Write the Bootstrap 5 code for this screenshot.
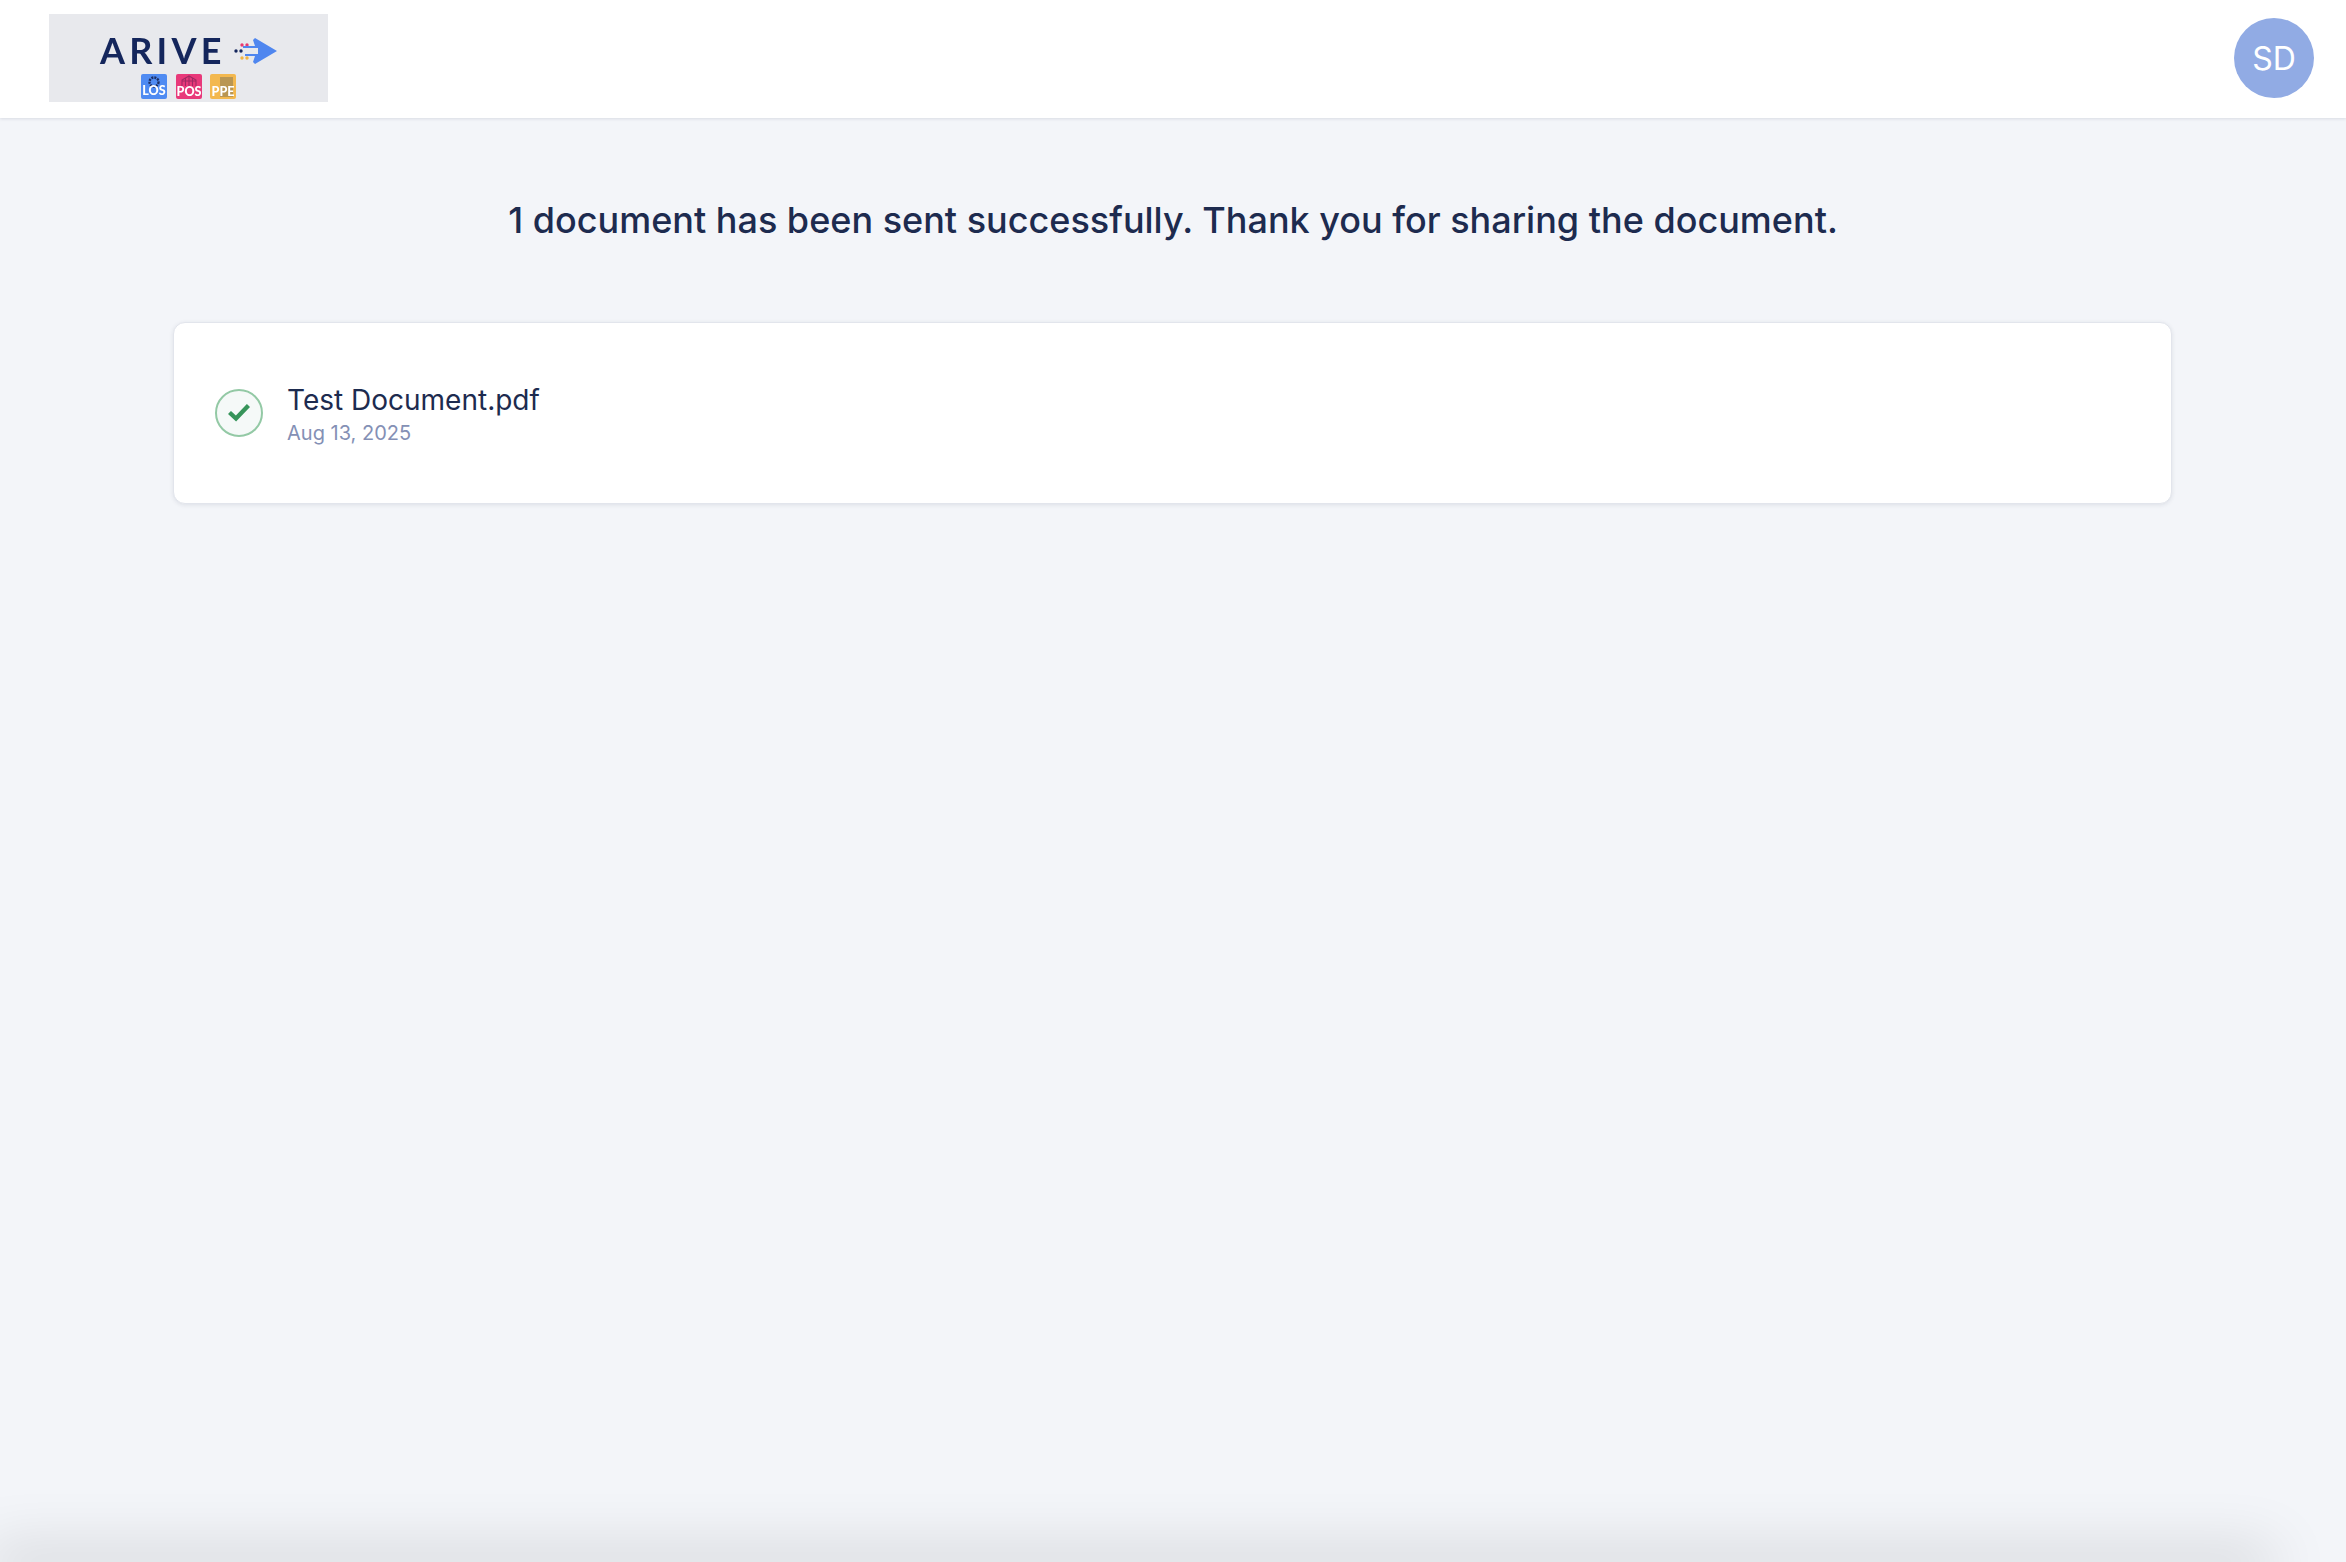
<!DOCTYPE html>
<html lang="en">
<head>
  <meta charset="UTF-8" />
  <title>Documents sent</title>
  <meta name="viewport" content="width=device-width, initial-scale=1" />
  <link href="https://cdn.jsdelivr.net/npm/bootstrap@5.3.3/dist/css/bootstrap.min.css" rel="stylesheet" />
  <style>
    html, body { height: 100%; }
    body {
      background-color: #f3f5f9;
      font-family: "Inter", "Liberation Sans", sans-serif;
      color: #1d2b4f;
      overflow: hidden;
    }
    .top-bar {
      height: 118px;
      padding: 14px 32px 16px 49px;
      background: #fff;
      box-shadow: 0 1px 3px rgba(30, 40, 70, .12);
    }
    .logo-svg { display: block; width: 279px; height: 88px; }
    .logo-soft { filter: blur(.5px); }
    .user-circle {
      width: 80px;
      height: 80px;
      padding-top: 2px;
      background: #91abe4;
      color: #fff;
      font-size: 32px;
      line-height: 1;
    }
    .sent-title {
      font-size: 36px;
      font-weight: 500;
      line-height: 44px;
      margin: 80px 0 80px;
      color: #1d2b4f;
    }
    .doc-card {
      width: 1999px;
      height: 182px;
      margin-left: 173px;
      padding-left: 41px;
      gap: 24px;
      border: 1px solid #e2e5ec;
      border-radius: 12px;
      box-shadow: 0 1px 4px rgba(30, 40, 70, .1);
    }
    .check-circle {
      width: 48px;
      height: 48px;
      background: #f5f9f8;
      border: 2px solid #93c9a5;
    }
    .doc-text { padding-top: 2px; }
    .doc-name { font-size: 28px; line-height: 34px; color: #1d2b4f; }
    .doc-date { font-size: 20px; line-height: 24px; color: #8490b5; margin-top: 4px; }
    .bottom-shade {
      position: fixed;
      left: 0;
      bottom: -4px;
      width: 2262px;
      height: 4px;
      box-shadow: 0 0 58px 12px rgba(0, 0, 0, .17);
    }
  </style>
</head>
<body>
  <header class="top-bar d-flex justify-content-between align-items-center">
    <svg class="logo-svg" viewBox="0 0 279 88" role="img" aria-label="Arive logo">
      <rect width="279" height="88" fill="#e8e9ed" />
      <g class="logo-soft">
        <text x="51" y="50" font-family="Lato, 'Liberation Sans', sans-serif" font-size="36" font-weight="700" letter-spacing="4.2" fill="#14265c">ARIVE</text>
        <circle cx="187" cy="37" r="1.7" fill="#14265c" /><circle cx="192" cy="37" r="1.7" fill="#14265c" />
        <circle cx="193" cy="31" r="1.7" fill="#e8396f" /><circle cx="198" cy="31" r="1.7" fill="#e8396f" />
        <circle cx="193" cy="44" r="1.7" fill="#f2b441" /><circle cx="198" cy="44" r="1.7" fill="#f2b441" />
        <path d="M206 24l22 13-22 13-2-2 2-6h-10v-2h13v-6h-15v-2h12l-2-6z" fill="#4f86ef" />
        <rect x="92" y="60" width="26" height="25" rx="2" fill="#4f8bf2" />
        <rect x="127" y="60" width="26" height="25" rx="2" fill="#e8397a" />
        <rect x="161" y="60" width="26" height="25" rx="2" fill="#f3b84f" />
        <circle cx="105" cy="68" r="4.5" fill="none" stroke="#1d2f63" stroke-width="2.4" stroke-dasharray="2 1" />
        <path d="M133 72v-6l7-4 7 4v6M133 67h14M140 62v10M136.5 64v8M143.5 64v8" fill="none" stroke="#a02a63" stroke-width="1.1" />
        <rect x="171" y="63" width="13" height="20" fill="#b99653" />
        <g font-family="Lato, 'Liberation Sans', sans-serif" font-size="12.5" font-weight="900" fill="#fff" text-anchor="middle">
          <text x="105" y="81">LOS</text><text x="140" y="82">POS</text><text x="174" y="82">PPE</text>
        </g>
      </g>
    </svg>
    <div class="user-circle rounded-circle d-flex align-items-center justify-content-center">SD</div>
  </header>

  <main>
    <h1 class="sent-title text-center">1 document has been sent successfully. Thank you for sharing the document.</h1>
    <div class="doc-card card flex-row align-items-center">
      <div class="check-circle rounded-circle d-flex align-items-center justify-content-center flex-shrink-0">
        <svg width="22" height="18" viewBox="0 0 22 18"><path d="M1.5 8.5l6.5 6 12.5-13" fill="none" stroke="#36945a" stroke-width="4.4" /></svg>
      </div>
      <div class="doc-text">
        <div class="doc-name">Test Document.pdf</div>
        <div class="doc-date">Aug 13, 2025</div>
      </div>
    </div>
  </main>
  <div class="bottom-shade"></div>
  <script src="https://cdn.jsdelivr.net/npm/bootstrap@5.3.3/dist/js/bootstrap.bundle.min.js"></script>
</body>
</html>
